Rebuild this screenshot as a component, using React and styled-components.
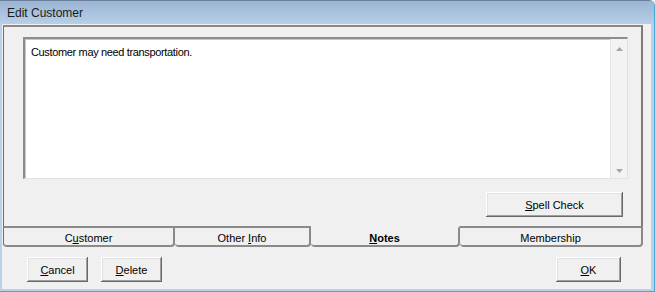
import React from "react";
import styled, { createGlobalStyle } from "styled-components";

const GlobalStyle = createGlobalStyle`
  html, body {
    margin: 0;
    padding: 0;
    background: #f0f0f0;
  }
  body {
    font-family: "Liberation Sans", Arial, sans-serif;
    font-size: 11px;
    color: #000;
  }
`;

const Window = styled.div`
  width: 655px;
  height: 292px;
  box-sizing: border-box;
  display: flex;
  flex-direction: column;
  background: #b9d1ea;
  border-right: 1px solid #3fa9d8;
  border-bottom: 1px solid #3fa9d8;
  border-top-right-radius: 6px;
  overflow: hidden;
`;

const TitleBar = styled.div`
  height: 24px;
  flex: none;
  display: flex;
  align-items: center;
  padding-left: 7px;
  font-size: 12px;
  color: #1a1a1a;
  background: linear-gradient(#9ab5d3, #b7cfe8);
  border-top: 1px solid #6a7f99;
  box-sizing: border-box;
`;

const Client = styled.div`
  flex: 1;
  margin: 0 3px 2px 2px;
  background: #f0f0f0;
  display: flex;
  flex-direction: column;
  padding: 1px 7px 0 1px;
`;

const TabControl = styled.div`
  display: flex;
  flex-direction: column;
  width: 640px;
`;

const Panel = styled.div`
  height: 201px;
  box-sizing: border-box;
  border-top: 2px solid #8a8a8a;
  border-left: 1px solid #6e6e6e;
  border-right: 2px solid #7c7c7c;
  padding: 10px 13px 0 19px;
  display: flex;
  flex-direction: column;
`;

const NoteBox = styled.div`
  height: 142px;
  box-sizing: border-box;
  background: #fff;
  border-top: 2px solid #8d8d8d;
  border-left: 2px solid #8d8d8d;
  border-right: 1px solid #e3e3e3;
  border-bottom: 1px solid #e3e3e3;
  box-shadow: inset 1px 1px 0 #c8c8c8;
  display: flex;
`;

const NoteText = styled.div`
  flex: 1;
  padding: 7px 6px;
  line-height: 13px;
  letter-spacing: -0.35px;
`;

const ScrollBar = styled.div`
  width: 16px;
  background: #f3f3f3;
  border-left: 1px solid #e8e8e8;
  display: flex;
  flex-direction: column;
  justify-content: space-between;
  align-items: center;
  padding: 8px 0 5px;
`;

const Arrow = styled.svg`
  width: 7px;
  height: 4px;
  display: block;
`;

const SpellRow = styled.div`
  display: flex;
  justify-content: flex-end;
  padding: 13px 5px 0 0;
`;

const Button = styled.button`
  width: ${(p) => p.$w}px;
  height: 25px;
  box-sizing: border-box;
  background: #f0f0f0;
  font-family: inherit;
  font-size: 11px;
  color: #000;
  padding: 0;
  border: none;
  box-shadow:
    inset -1px -1px 0 #696969,
    inset 1px 1px 0 #ffffff,
    inset -2px -2px 0 #a0a0a0,
    inset 2px 2px 0 #e3e3e3;
  display: flex;
  align-items: center;
  justify-content: center;
`;

const TabRow = styled.div`
  display: flex;
  height: 21px;
`;

const Tab = styled.div`
  width: ${(p) => p.$w}px;
  box-sizing: border-box;
  border-top: 2px solid ${(p) => (p.$active ? "transparent" : "#8a8a8a")};
  border-right: 2px solid #8a8a8a;
  border-left: ${(p) => (p.$first ? "1px solid #6e6e6e" : "none")};
  border-bottom: 2px solid #8a8a8a;
  border-radius: 0 0 4px 4px;
  display: flex;
  align-items: center;
  justify-content: center;
  font-weight: ${(p) => (p.$active ? "bold" : "normal")};
  padding-top: 3px;
`;

const Footer = styled.div`
  display: flex;
  align-items: center;
  padding: 10px 0 0 24px;
  gap: 13px;
`;

const Spacer = styled.div`
  flex: 1;
`;

const Key = styled.u``;

const Tabs = [
  { w: 172, label: <>C<Key>u</Key>stomer</> },
  { w: 136, label: <>Other <Key>I</Key>nfo</> },
  { w: 149, label: <><Key>N</Key>otes</>, active: true },
  { w: 183, label: <>Membership</> },
];

export default function App() {
  return (
    <>
      <GlobalStyle />
      <Window>
        <TitleBar>Edit Customer</TitleBar>
        <Client>
          <TabControl>
            <Panel>
              <NoteBox>
                <NoteText>Customer may need transportation.</NoteText>
                <ScrollBar>
                  <Arrow viewBox="0 0 7 4">
                    <path d="M3.5 0 L7 4 L0 4 Z" fill="#a6a6a6" />
                  </Arrow>
                  <Arrow viewBox="0 0 7 4">
                    <path d="M0 0 L7 0 L3.5 4 Z" fill="#a6a6a6" />
                  </Arrow>
                </ScrollBar>
              </NoteBox>
              <SpellRow>
                <Button $w={137}>
                  <Key>S</Key>pell Check
                </Button>
              </SpellRow>
            </Panel>
            <TabRow>
              {Tabs.map((t, i) => (
                <Tab key={i} $w={t.w} $active={t.active} $first={i === 0}>
                  <span>{t.label}</span>
                </Tab>
              ))}
            </TabRow>
          </TabControl>
          <Footer>
            <Button $w={61}>
              <Key>C</Key>ancel
            </Button>
            <Button $w={61}>
              <Key>D</Key>elete
            </Button>
            <Spacer />
            <Button $w={65} style={{ marginRight: 23 }}>
              <Key>O</Key>K
            </Button>
          </Footer>
        </Client>
      </Window>
    </>
  );
}
